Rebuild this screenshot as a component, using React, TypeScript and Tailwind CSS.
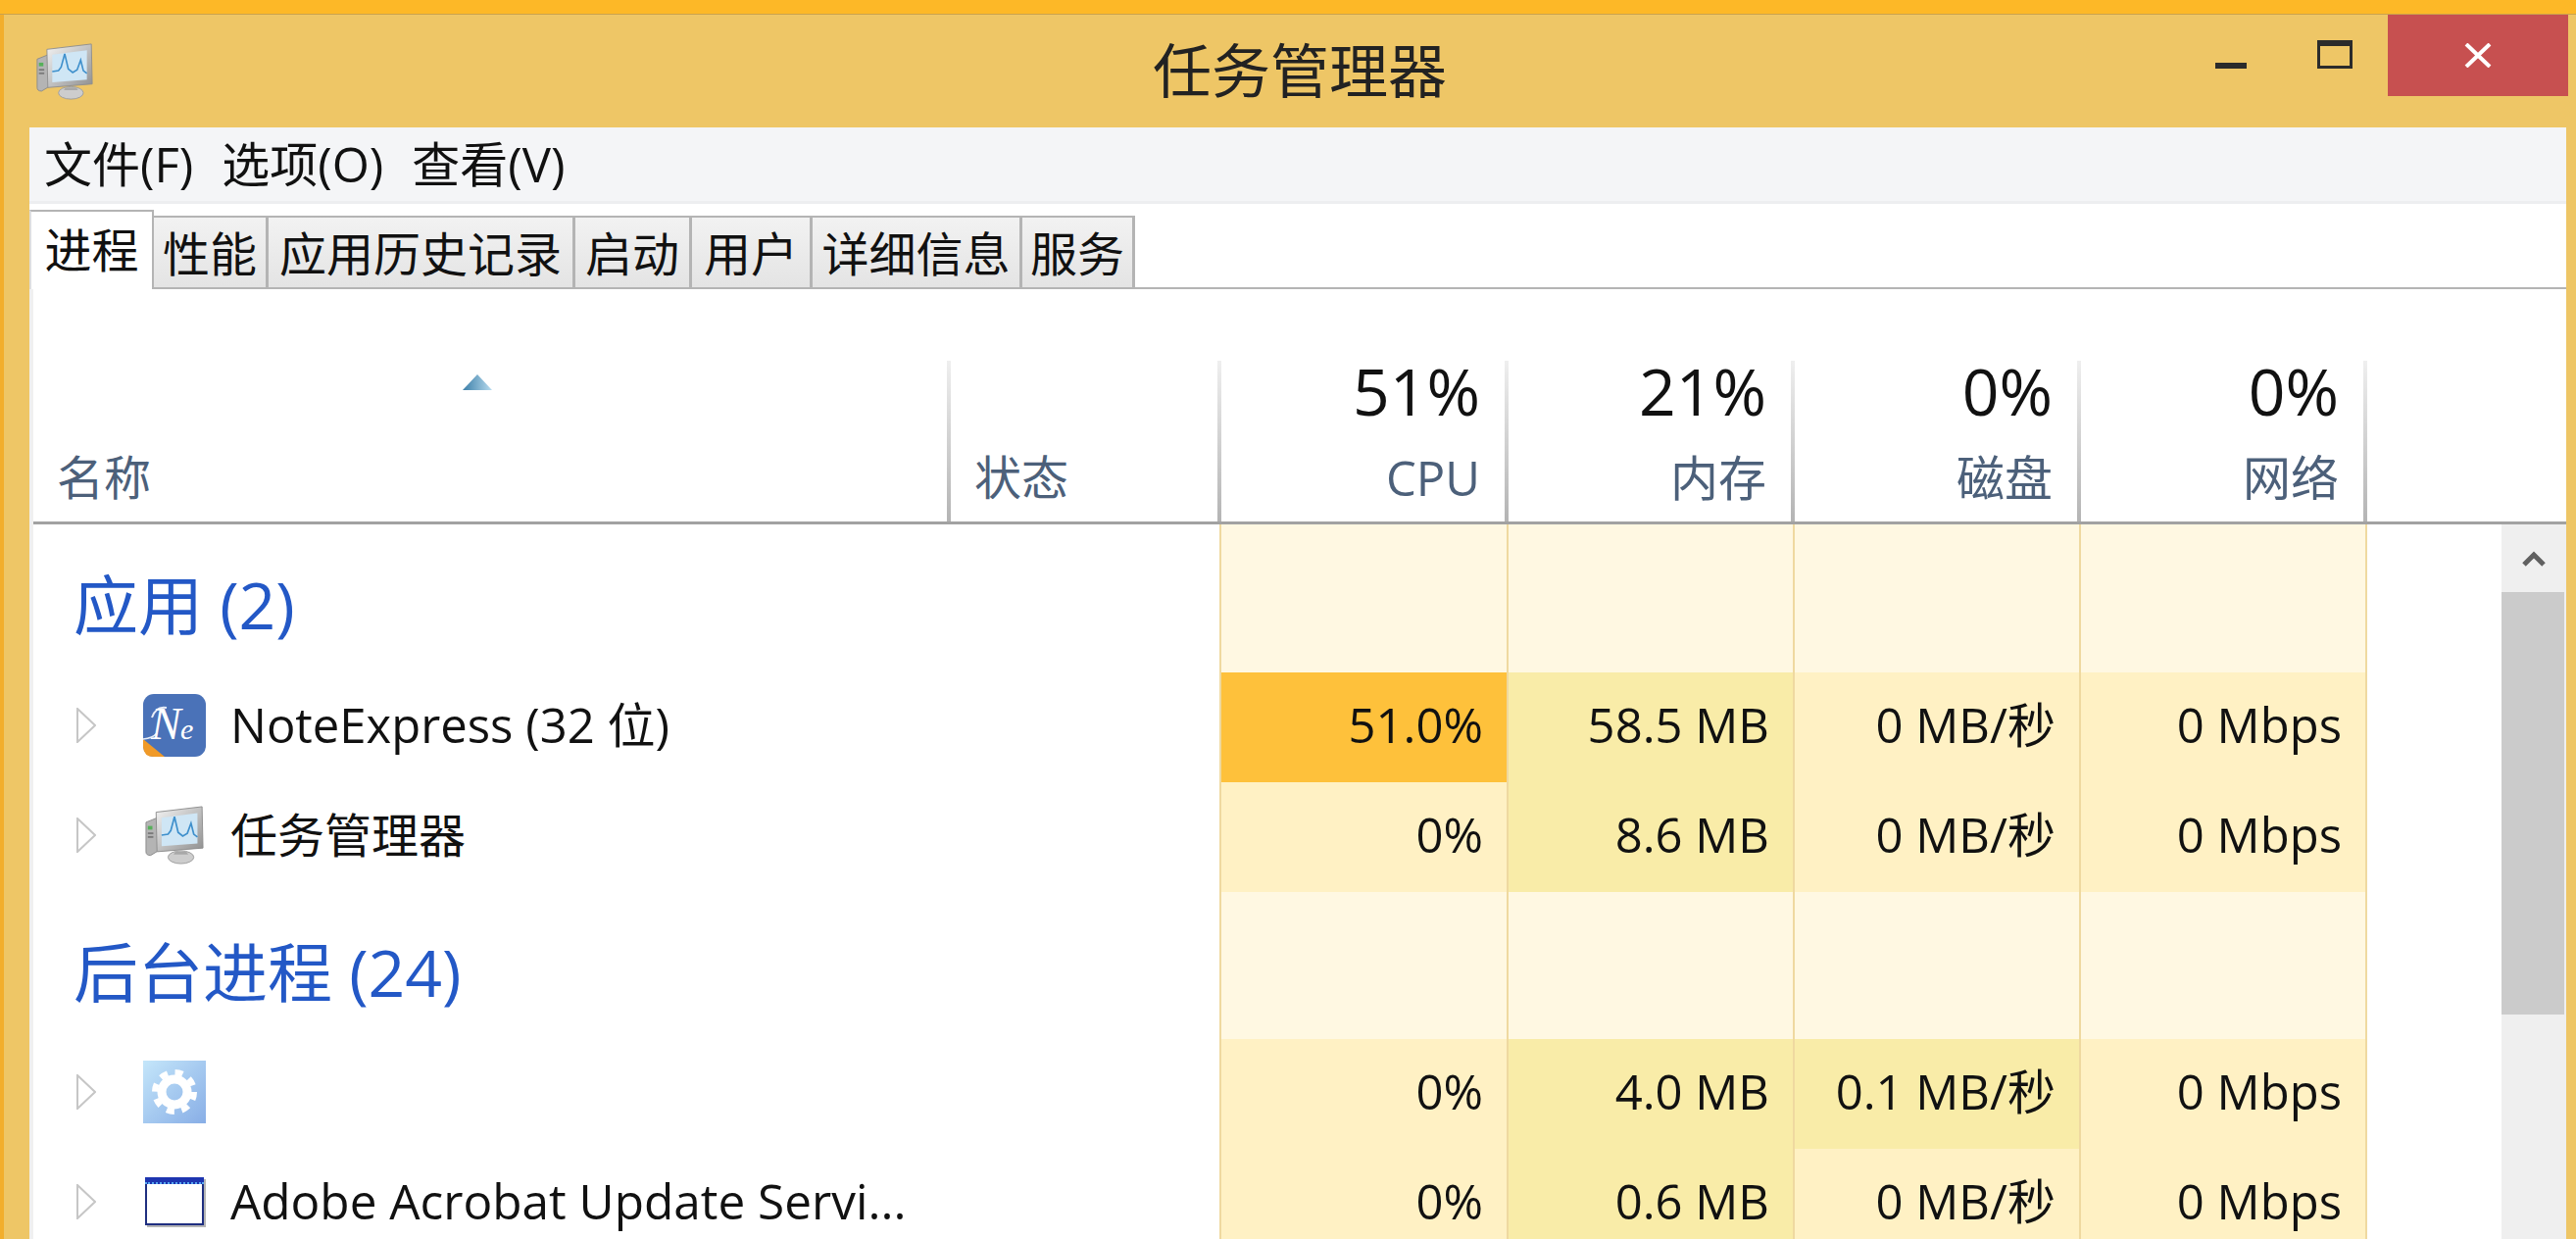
const gridCols = "grid grid-cols-[1210px_293px_292px_292px_292px_1fr]";

const tabs = [
  { label: "性能", width: "w-[117px]" },
  { label: "应用历史记录", width: "w-[313px]" },
  { label: "启动", width: "w-[119px]" },
  { label: "用户", width: "w-[123px]" },
  { label: "详细信息", width: "w-[214px]" },
  { label: "服务", width: "w-[115px]" },
];

const columns = [
  { pct: "51%", label: "CPU" },
  { pct: "21%", label: "内存" },
  { pct: "0%", label: "磁盘" },
  { pct: "0%", label: "网络" },
];

const TaskManagerIcon = ({ className, id }: { className: string; id: string }) => (
  <svg viewBox="0 0 64 64" className={className}>
    <defs>
      <linearGradient id={id} x1="0" y1="0" x2="1" y2="1">
        <stop offset="0" stopColor="#f4f4f4" />
        <stop offset="1" stopColor="#8f8f8f" />
      </linearGradient>
    </defs>
    <path d="M1 18 L16 12 V48 L6 54 Q1 54 1 50 Z" fill="#b4b4b4" stroke="#8a8a8a" strokeWidth="1" />
    <rect x="3" y="22" width="5" height="4" fill="#56b05a" />
    <rect x="3" y="29" width="6" height="2" fill="#7a7a7a" />
    <rect x="3" y="33" width="6" height="2" fill="#7a7a7a" />
    <path d="M12 7 L62 1 L63 46 L13 50 Z" fill={`url(#${id})`} stroke="#8d8d8d" strokeWidth="1" />
    <path d="M18 13 L57 8 V41 L18 44 Z" fill="#cfe6f5" />
    <path d="M18 32 L25 31 L28 27 L32 12 L36 29 L41 33 L46 30 L50 19 L53 31 L57 34" fill="none" stroke="#3f90cc" strokeWidth="1.8" />
    <ellipse cx="39" cy="56" rx="14" ry="7" fill="#cdcdcd" stroke="#9c9c9c" strokeWidth="1" />
    <path d="M33 50 H45 L47 53 H31 Z" fill="#a8a8a8" />
  </svg>
);

const NoteExpressIcon = () => (
  <svg viewBox="0 0 64 64" className="w-[64px] h-[64px]">
    <rect width="64" height="64" rx="11" fill="#4a72b8" />
    <path d="M0 46 L22 64 H11 Q0 64 0 53 Z" fill="#f09a28" />
    <path d="M0 46 Q10 45 14 40" fill="none" stroke="#e8eef8" strokeWidth="1.6" />
    <path d="M9 24 Q13 12 24 14" fill="none" stroke="#e8eef8" strokeWidth="2" />
    <text x="8" y="46" fill="#ffffff" fontSize="46" fontStyle="italic" fontFamily="'Liberation Serif', serif">N</text>
    <text x="38" y="46" fill="#ffffff" fontSize="30" fontStyle="italic" fontFamily="'Liberation Serif', serif">e</text>
  </svg>
);

const GearIcon = () => (
  <svg viewBox="0 0 64 64" className="w-[64px] h-[64px]">
    <defs>
      <linearGradient id="gearBg" x1="0" y1="0" x2="1" y2="1">
        <stop offset="0" stopColor="#c4e6fa" />
        <stop offset="1" stopColor="#88aee6" />
      </linearGradient>
    </defs>
    <rect width="64" height="64" fill="url(#gearBg)" />
    <circle cx="32" cy="32" r="13" fill="none" stroke="#ffffff" strokeWidth="9" />
    <circle cx="32" cy="32" r="20" fill="none" stroke="#ffffff" strokeWidth="6" strokeDasharray="8 7.7" />
  </svg>
);

const WindowIcon = () => (
  <div className="w-[60px] h-[49px] bg-white border-2 border-[#1f2f80] border-t-0 shadow-[2px_2px_0_#b5b5b5]">
    <div className="h-[7px] -mx-[2px] bg-[#1d35b0] border-b-2 border-dotted border-[#58a8f0]" />
  </div>
);

const ExpandArrow = () => (
  <svg viewBox="0 0 20 36" className="w-[20px] h-[36px] shrink-0">
    <path d="M1 1 L19 18 L1 35 Z" fill="#ffffff" stroke="#c6c6c6" strokeWidth="2" />
  </svg>
);

const Section = ({ title, className }: { title: string; className: string }) => (
  <div className={`${gridCols} ${className}`}>
    <div className="pl-[41px] pt-[12px] flex items-center text-[66px] text-[#2358c6]">{title}</div>
    <div className="bg-[#fff8e2] border-l-2 border-[#efd9a0]" />
    <div className="bg-[#fff8e2] border-l-2 border-[#efd9a0]" />
    <div className="bg-[#fff8e2] border-l-2 border-[#efd9a0]" />
    <div className="bg-[#fff8e2] border-l-2 border-[#efd9a0]" />
    <div className="border-l-2 border-[#efd9a0]" />
  </div>
);

const Cell = ({ value, bg }: { value: string; bg: string }) => (
  <div className={`${bg} border-l-2 border-[#efd9a0] flex items-center justify-end pr-[24px] pb-[5px]`}>{value}</div>
);

type RowProps = {
  icon: React.ReactNode;
  name?: string;
  nameSize?: string;
  cpu: string;
  mem: string;
  disk: string;
  net: string;
  cpuBg?: string;
  diskBg?: string;
};

const Row = ({ icon, name, nameSize = "text-[49.5px]", cpu, mem, disk, net, cpuBg = "bg-[#fff1c4]", diskBg = "bg-[#fff1c4]" }: RowProps) => (
  <div className={`${gridCols} h-[112px] text-[49px] text-[#111]`}>
    <div className="flex items-center pl-[44px] pb-[5px]">
      <ExpandArrow />
      <div className="ml-[48px] w-[64px] flex justify-center shrink-0">{icon}</div>
      <span className={`ml-[25px] ${nameSize}`}>{name}</span>
    </div>
    <Cell value={cpu} bg={cpuBg} />
    <Cell value={mem} bg="bg-[#f9eca8]" />
    <Cell value={disk} bg={diskBg} />
    <Cell value={net} bg="bg-[#fff1c4]" />
    <div className="border-l-2 border-[#efd9a0]" />
  </div>
);

const HeaderDivider = () => (
  <div className="absolute left-0 top-[73px] bottom-0 w-[4px] -ml-[2px] bg-linear-to-b from-[#efefef] to-[#b4b4b4]" />
);

export default function App() {
  return (
    <div className="w-[2628px] h-[1264px] overflow-hidden bg-[#eec666] font-['Open_Sans','Noto_Sans_CJK_SC',sans-serif]">
      <div className="h-[15px] bg-[#fdb827] border-b border-[#c9a24e]" />
      <div className="flex h-[1249px]">
        <div className="w-[4px] bg-[#f2ae2c]" />
        <div className="flex-1 min-w-0">
          {/* Title bar */}
          <div className="-ml-[4px] grid grid-cols-[1026px_600px_1fr] h-[115px]">
            <div className="pl-[35px] pt-[29px]">
              <TaskManagerIcon id="tmFrameTitle" className="w-[62px] h-[58px]" />
            </div>
            <div className="text-center text-[60px] leading-[114px] text-[#222]">任务管理器</div>
            <div className="flex justify-end items-start pr-[8px]">
              <div className="mt-[49px] w-[32px] h-[6px] bg-[#2b2b2b]" />
              <div className="ml-[72px] mt-[26px] w-[36px] h-[29px] border-[3px] border-t-[6px] border-[#2b2b2b]" />
              <div className="ml-[36px] w-[184px] h-[83px] bg-[#c75050] flex items-center justify-center">
                <svg viewBox="0 0 28 25" className="w-[28px] h-[25px]">
                  <path d="M2 1 L26 24 M26 1 L2 24" stroke="#ffffff" strokeWidth="4" />
                </svg>
              </div>
            </div>
          </div>

          {/* Main panel */}
          <div className="ml-[26px] mr-[10px] h-[1134px] bg-white overflow-hidden">
            <div className="h-[78px] bg-[#f4f5f7] border-b-[3px] border-[#edeef0] flex items-center gap-[29px] pl-[15px] text-[49px] text-[#111]">
              <span>文件(F)</span>
              <span>选项(O)</span>
              <span>查看(V)</span>
            </div>

            <div className="h-[87px] flex items-end border-b-2 border-[#b4b4b4] text-[48px] text-[#111]">
              <div className="w-[127px] h-[81px] -mb-[2px] bg-white border-t-2 border-r-2 border-l-2 border-t-[#b4b4b4] border-r-[#b4b4b4] border-l-[#dedede] text-center leading-[77px] relative">
                进程
              </div>
              {tabs.map((tab) => (
                <div
                  key={tab.label}
                  className={`${tab.width} h-[73px] border-t-2 border-r-[3px] border-[#b4b4b4] bg-linear-to-b from-[#f2f2f2] to-[#e4e4e4] text-center leading-[73px]`}
                >
                  {tab.label}
                </div>
              ))}
            </div>

            <div className="pl-[4px] bg-[#f0f0f0]">
              <div className="bg-white">
                {/* Column headers */}
                <div className="grid grid-cols-[934px_276px_293px_292px_292px_292px_1fr] h-[240px] border-b-[3px] border-[#a2a2a2]">
                  <div className="relative pl-[24px] pt-[158px] text-[48px] leading-[68px] text-[#4c607a]">
                    <svg viewBox="0 0 30 16" className="absolute left-[438px] top-[87px] w-[30px] h-[16px]">
                      <defs>
                        <linearGradient id="sortArrow" x1="0" y1="0" x2="1" y2="0">
                          <stop offset="0" stopColor="#3b7ea8" />
                          <stop offset="1" stopColor="#b9dcef" />
                        </linearGradient>
                      </defs>
                      <path d="M15 0 L30 16 H0 Z" fill="url(#sortArrow)" />
                    </svg>
                    名称
                  </div>
                  <div className="relative pl-[26px] pt-[158px] text-[48px] leading-[68px] text-[#4c607a]">
                    <HeaderDivider />
                    状态
                  </div>
                  {columns.map((col) => (
                    <div key={col.label} className="relative pr-[27px] text-right">
                      <HeaderDivider />
                      <div className="pt-[63px] text-[66px] leading-[80px] text-[#111]">{col.pct}</div>
                      <div className="mt-[15px] text-[49px] leading-[68px] text-[#4c607a]">{col.label}</div>
                    </div>
                  ))}
                  <div className="relative">
                    <HeaderDivider />
                  </div>
                </div>

                {/* Rows and scrollbar */}
                <div className="flex">
                  <div className="w-[2518px] shrink-0">
                    <Section title="应用 (2)" className="h-[151px]" />
                    <Row icon={<NoteExpressIcon />} name="NoteExpress (32 位)" nameSize="text-[49px]" cpu="51.0%" mem="58.5 MB" disk="0 MB/秒" net="0 Mbps" cpuBg="bg-[#fec13b]" />
                    <Row icon={<TaskManagerIcon id="tmFrameRow" className="w-[64px] h-[60px]" />} name="任务管理器" nameSize="text-[48px]" cpu="0%" mem="8.6 MB" disk="0 MB/秒" net="0 Mbps" />
                    <Section title="后台进程 (24)" className="h-[150px]" />
                    <Row icon={<GearIcon />} cpu="0%" mem="4.0 MB" disk="0.1 MB/秒" net="0 Mbps" diskBg="bg-[#f9eca8]" />
                    <Row icon={<WindowIcon />} name="Adobe Acrobat Update Servi..." cpu="0%" mem="0.6 MB" disk="0 MB/秒" net="0 Mbps" />
                  </div>
                  <div className="w-[66px] shrink-0 bg-[#efefef]">
                    <div className="h-[69px] flex items-center justify-center">
                      <svg viewBox="0 0 24 16" className="w-[24px] h-[16px]">
                        <path d="M2 14 L12 4 L22 14" fill="none" stroke="#606060" strokeWidth="5" />
                      </svg>
                    </div>
                    <div className="h-[431px] w-[64px] bg-[#cbcbcb]" />
                  </div>
                </div>
              </div>
            </div>
          </div>
        </div>
      </div>
    </div>
  );
}
